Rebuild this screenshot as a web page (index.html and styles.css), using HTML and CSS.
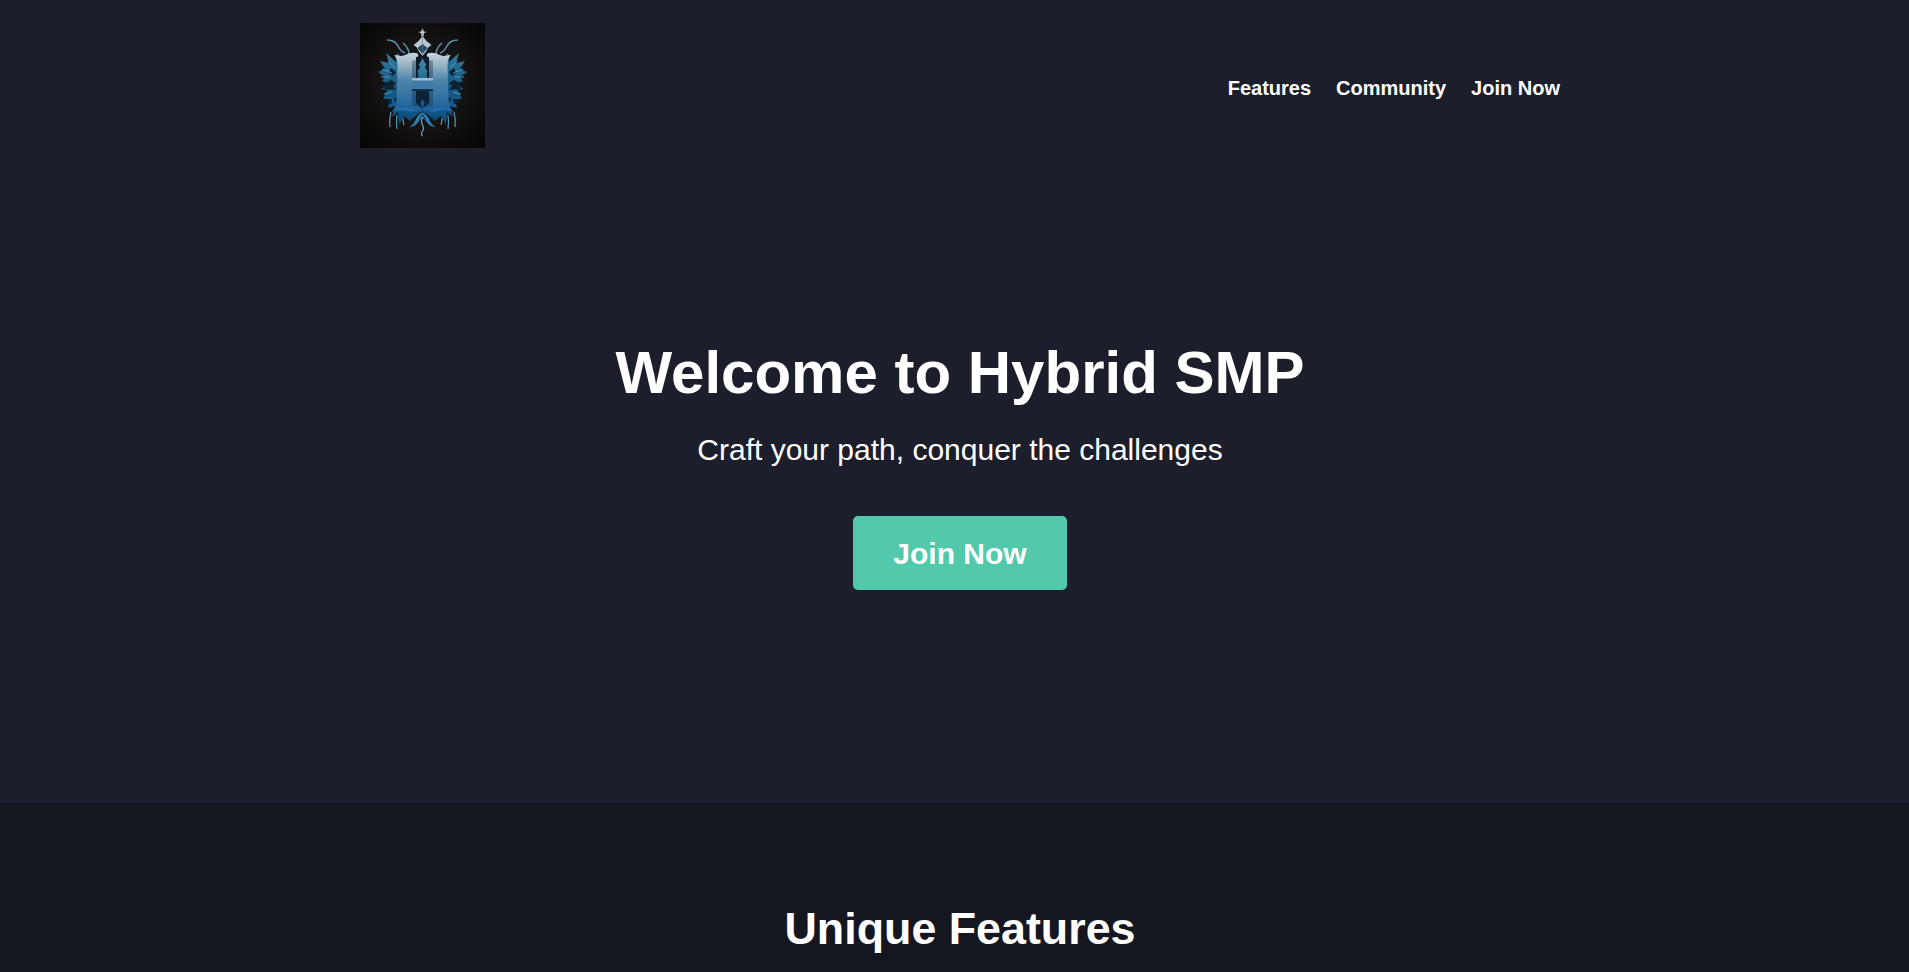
FILE: index.html
```html
<!DOCTYPE html>
<html lang="en">
<head>
<meta charset="utf-8">
<title>Hybrid SMP</title>
<link rel="stylesheet" href="styles.css">
</head>
<body>
<div class="page">
  <section class="hero">
    <header class="topbar">
      <a class="logo" href="#" aria-label="Hybrid SMP">
        <svg viewBox="0 0 125 125" width="125" height="125">
          <defs>
            <radialGradient id="bg" cx="50%" cy="48%" r="72%"><stop offset="0" stop-color="#1c1e22"/><stop offset="0.6" stop-color="#120f0e"/><stop offset="1" stop-color="#050404"/></radialGradient>
            <linearGradient id="steel" gradientUnits="userSpaceOnUse" x1="0" y1="30" x2="0" y2="90"><stop offset="0" stop-color="#c6d3db"/><stop offset="0.18" stop-color="#9fb6c6"/><stop offset="0.45" stop-color="#4f86aa"/><stop offset="0.8" stop-color="#2a6c9f"/><stop offset="1" stop-color="#1a5f9c"/></linearGradient>
            <linearGradient id="wing" gradientUnits="userSpaceOnUse" x1="0" y1="28" x2="0" y2="105"><stop offset="0" stop-color="#357da3"/><stop offset="0.45" stop-color="#175880"/><stop offset="0.75" stop-color="#125a90"/><stop offset="1" stop-color="#0d4166"/></linearGradient>
            <linearGradient id="tree" gradientUnits="userSpaceOnUse" x1="0" y1="34" x2="0" y2="56"><stop offset="0" stop-color="#4a8ca8"/><stop offset="1" stop-color="#1d6d98"/></linearGradient>
            <filter id="soft" x="-10%" y="-10%" width="120%" height="120%"><feGaussianBlur stdDeviation="0.6"/></filter>
            <g id="half">
              <path d="M46 38 37 30l-1 9-10-9 3 10-9-2 5 8-7 3 7 5-3 4 5 2-5 6 5 2-4 8 7 0-2 9 7-2-3 11 6-5 1 13 5-9 6 5 8-7 7-4 0-48z" fill="url(#wing)"/>
              <path d="M24 61l7-4 5 3-3 3 3 4-7-1-4 2zM31 45l5 4-3 4-4-3zM27 76l5 0-1 5-4-1zM34 74l3 2-2 3z" fill="#08202f"/>
              <path d="M22 46l10 4M21 54l9 0M24 71l8-2M28 38l7 7" stroke="#4b9ac4" stroke-width="1" fill="none"/>
              <path d="M31 89q-2 8-1 15M37 92q-1 7 0 14M43 95q0 4 1 7" stroke="#5f9fc2" stroke-width="1.100" fill="none"/>
              <path d="M27 17q8 0 11 6t7 7M43 20q6 5 6 11" fill="none" stroke="#5f93b0" stroke-width="1.500"/>
              <path d="M62.500 89q-5 3-7 8t-6 7q5 0 8-4t5-5z" fill="#2b7eb2"/>
              <path d="M62.500 92q-3 3-3 7" stroke="#0a2438" stroke-width="1" fill="none"/>
              <path d="M36 32q5 2 9 0q6-3 11-2q3 .5 2 3l-2 4 0 43q1 3 6.500 5l-2 3q-3-1-6 0q-4 1-7-1q-5-1-9 0q-3 .5-7 2q4-4 5-9l1-39q0-4-3-9z" fill="url(#steel)"/>
              <path d="M52 38l4-1 0 43 2 4-6-1z" fill="#12344e" opacity="0.4"/>
              <path d="M32 87q8-3 17-1q5 1 7 2q-4 1-8 0q-8-2-16-1z" fill="#2f93d8" opacity="0.4"/>
              <path d="M62.500 5l1.300 3.500 3 .5-3 1-.3 3.500-1 0z" fill="#d9dfe3"/>
              <path d="M62.500 13q-3 5-9 9q4 2 5 6l4 5z" fill="#b9c7d0"/>
              <path d="M62.500 21l-5 4 5 6z" fill="#1f4a69"/>
            </g>
          </defs>
          <rect width="125" height="125" fill="url(#bg)"/>
          <g filter="url(#soft)">
            <use href="#half"/>
            <use href="#half" transform="translate(125 0) scale(-1 1)"/>
            <path d="M56 34l13 0 0 22-13 0z" fill="#0b1f2e"/>
            <path d="M62.500 35q1.500 4 4 7l-2 2 3 4-1 3 1 5-10 0 1-5-1-3 3-4-2-2q2.500-3 4-7z" fill="url(#tree)"/>
            <path d="M52 56l21 0 0 11-21 0z" fill="#3f7ca6"/>
            <path d="M52 55l21 0 0 2.500-21 0z" fill="#a3bccd"/>
            <path d="M52 66l21 0 0 2-21 0z" fill="#0f3350"/>
            <path d="M56 68l13 0 0 12-3 3-3.500 2-3.500-2-3-3z" fill="#0a2235"/>
            <path d="M62.500 76l2 4-2 6-2-6z" fill="#175a8f"/>
            <path d="M62.500 94q-2 4 0 8t0 6q-2 3 0 5" fill="none" stroke="#6fb0d6" stroke-width="1.100"/>
          </g>
        </svg>
      </a>
      <nav class="nav">
        <a href="#">Features</a>
        <a href="#">Community</a>
        <a href="#">Join Now</a>
      </nav>
    </header>
    <div class="intro">
      <h1>Welcome to Hybrid SMP</h1>
      <p>Craft your path, conquer the challenges</p>
      <a class="cta" href="#">Join Now</a>
    </div>
  </section>
  <section class="features">
    <h2>Unique Features</h2>
  </section>
</div>
</body>
</html>
```
FILE: styles.css
```css
* { box-sizing: border-box; }
html, body { margin: 0; height: 100%; overflow: hidden; }
body {
  background: #1c1f2b;
  color: #fff;
  font-family: "Liberation Sans", Arial, sans-serif;
}
.page { width: 1920px; }
.hero { height: 803px; background: #1c1f2b; display: flex; flex-direction: column; }
.topbar {
  width: 1200px;
  margin: 0 auto;
  padding-top: 23px;
  display: flex;
  justify-content: space-between;
  align-items: center;
}
.logo { display: block; width: 125px; height: 125px; }
.logo svg { display: block; }
.nav { display: flex; gap: 25px; padding-top: 5px; }
.nav a { color: #fff; text-decoration: none; font-weight: 700; font-size: 20px; }
.intro { margin-top: 190px; text-align: center; }
.intro h1 { margin: 0; font-size: 60px; line-height: 69px; font-weight: 700; }
.intro p { margin: 26px 0 0; font-size: 30px; line-height: 34px; }
.cta {
  display: inline-block;
  margin-top: 49px;
  padding: 21px 40px 19px;
  width: 214px;
  height: 74px;
  background: #53c9ab;
  border-radius: 5px;
  color: #fff;
  text-decoration: none;
  font-weight: 700;
  font-size: 30px;
  line-height: 34px;
}
.features { background: #14171f; height: 169px; padding-top: 100px; text-align: center; }
.features h2 { margin: 0; font-size: 44.800px; line-height: 50px; font-weight: 700; }
```
